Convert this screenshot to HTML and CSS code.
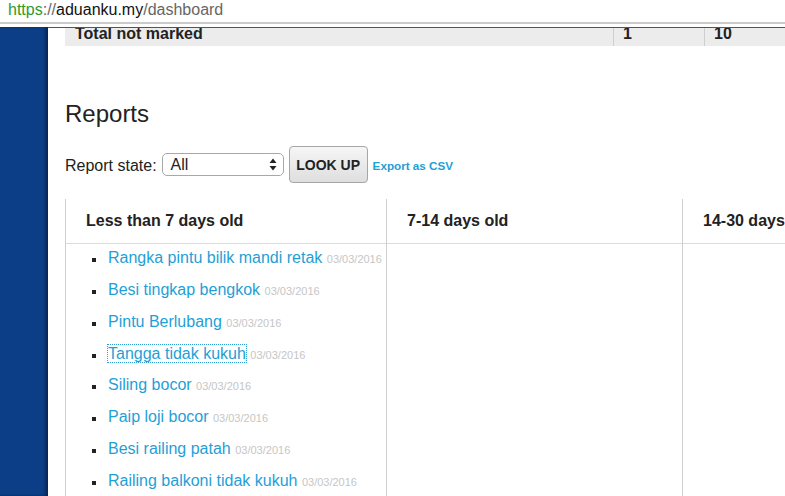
FILE: index.html
```html
<!DOCTYPE html>
<html>
<head>
<meta charset="utf-8">
<title>Dashboard</title>
<link rel="stylesheet" href="styles.css">
</head>
<body>
<div class="chrome"><span class="scheme">https</span><span class="sep">://</span><span class="host">aduanku.my</span><span class="path">/dashboard</span></div>
<div class="page">
  <aside class="sidebar"></aside>
  <main class="main">
    <div class="summary">
      <div class="sum-cell">Total not marked</div>
      <div class="sum-cell num">1</div>
      <div class="sum-cell num">10</div>
    </div>
    <h2 class="title">Reports</h2>
    <div class="controls">
      <span class="label">Report state:</span>
      <div class="select"><span>All</span>
        <svg class="arrows" width="8" height="13" viewBox="0 0 8 13"><path d="M4 0.5 L7.5 5 L0.5 5 Z M4 12.5 L7.5 8 L0.5 8 Z" fill="#222"/></svg>
      </div>
      <button class="btn">LOOK UP</button>
      <a class="export" href="#">Export as CSV</a>
    </div>
    <div class="board">
      <section class="col">
        <div class="col-head">Less than 7 days old</div>
        <ul class="reports">
          <li><a href="#">Rangka pintu bilik mandi retak</a> <span class="date">03/03/2016</span></li>
          <li><a href="#">Besi tingkap bengkok</a> <span class="date">03/03/2016</span></li>
          <li><a href="#">Pintu Berlubang</a> <span class="date">03/03/2016</span></li>
          <li><a href="#" class="focused">Tangga tidak kukuh</a> <span class="date">03/03/2016</span></li>
          <li><a href="#">Siling bocor</a> <span class="date">03/03/2016</span></li>
          <li><a href="#">Paip loji bocor</a> <span class="date">03/03/2016</span></li>
          <li><a href="#">Besi railing patah</a> <span class="date">03/03/2016</span></li>
          <li><a href="#">Railing balkoni tidak kukuh</a> <span class="date">03/03/2016</span></li>
        </ul>
      </section>
      <section class="col">
        <div class="col-head">7-14 days old</div>
      </section>
      <section class="col">
        <div class="col-head">14-30 days old</div>
      </section>
    </div>
  </main>
</div>
</body>
</html>
```
FILE: styles.css
```css
html, body {
  margin: 0;
  padding: 0;
  width: 785px;
  height: 496px;
  overflow: hidden;
  background: #fff;
  font-family: "Liberation Sans", Arial, sans-serif;
  color: #222;
}

.chrome {
  height: 22px;
  border-bottom: 2px solid #cbcbcb;
  padding-left: 8px;
  font-size: 16px;
  line-height: 20px;
  white-space: nowrap;
  box-sizing: content-box;
}
.scheme { color: #2f9a2a; }
.sep { color: #666; }
.host { color: #111; }
.path { color: #666; }

.page {
  display: flex;
  margin-top: 3px;
  height: 469px;
}

.sidebar {
  flex: 0 0 48px;
  background: #0b3e86;
  box-shadow: inset -3px 0 3px rgba(0, 0, 0, 0.35);
}

.main {
  flex: 1;
  min-width: 0;
  border-top: 1px solid #555;
  padding-left: 17px;
  overflow: hidden;
}

.summary {
  display: grid;
  grid-template-columns: 548px 91px 1fr;
  height: 23px;
  margin-top: -5px;
  background: #ececec;
  font-weight: bold;
  font-size: 16px;
  line-height: 22px;
}
.sum-cell { padding-left: 10px; }
.sum-cell.num {
  padding-left: 9px;
  border-left: 1px solid #cfcfcf;
}

.title {
  margin: 54.5px 0 0;
  font-size: 24px;
  line-height: 26px;
  font-weight: normal;
  color: #222;
}

.controls {
  display: flex;
  align-items: center;
  margin-top: 19.5px;
  height: 37px;
}
.label {
  font-size: 16px;
  margin-right: 5px;
  position: relative;
  top: 1px;
}
.select {
  box-sizing: border-box;
  width: 122px;
  height: 23px;
  border: 1px solid #a8a8a8;
  border-radius: 5px;
  display: flex;
  align-items: center;
  justify-content: space-between;
  padding: 0 6px 0 8px;
  font-size: 16px;
  background: #fff;
}
.btn {
  box-sizing: border-box;
  margin-left: 5px;
  width: 79px;
  height: 37px;
  border: 1px solid #a6a6a6;
  border-radius: 4px;
  background: linear-gradient(#f6f6f6, #dedede);
  font-family: "Liberation Sans", Arial, sans-serif;
  font-weight: bold;
  font-size: 14px;
  color: #222;
  padding: 0;
}
.export {
  margin-left: 5px;
  font-size: 11.7px;
  font-weight: bold;
  color: #1f9fd6;
  text-decoration: none;
  position: relative;
  top: 1px;
}

.board {
  display: grid;
  grid-template-columns: 321px 296px 320px;
  margin-top: 16px;
  height: 320px;
}
.col {
  border-left: 1px solid #cfcfcf;
}
.col-head {
  height: 44px;
  line-height: 44px;
  padding-left: 20px;
  font-weight: bold;
  font-size: 16px;
  white-space: nowrap;
  border-bottom: 1px solid #dcdcdc;
}

.reports {
  list-style: none;
  margin: 0;
  padding: 4px 0 0 26px;
}
.reports li {
  height: 20px;
  line-height: 20px;
  margin-bottom: 11.86px;
  white-space: nowrap;
  font-size: 16px;
}
.reports li::before {
  content: "";
  display: inline-block;
  width: 4px;
  height: 4px;
  background: #222;
  margin-right: 12px;
  vertical-align: 1px;
}
.reports a {
  color: #1f9fd6;
  text-decoration: none;
}
.reports a.focused {
  outline: 1px dotted #2a9fd6;
}
.date {
  font-size: 11px;
  line-height: 1;
  color: #c6c6c6;
}
```
